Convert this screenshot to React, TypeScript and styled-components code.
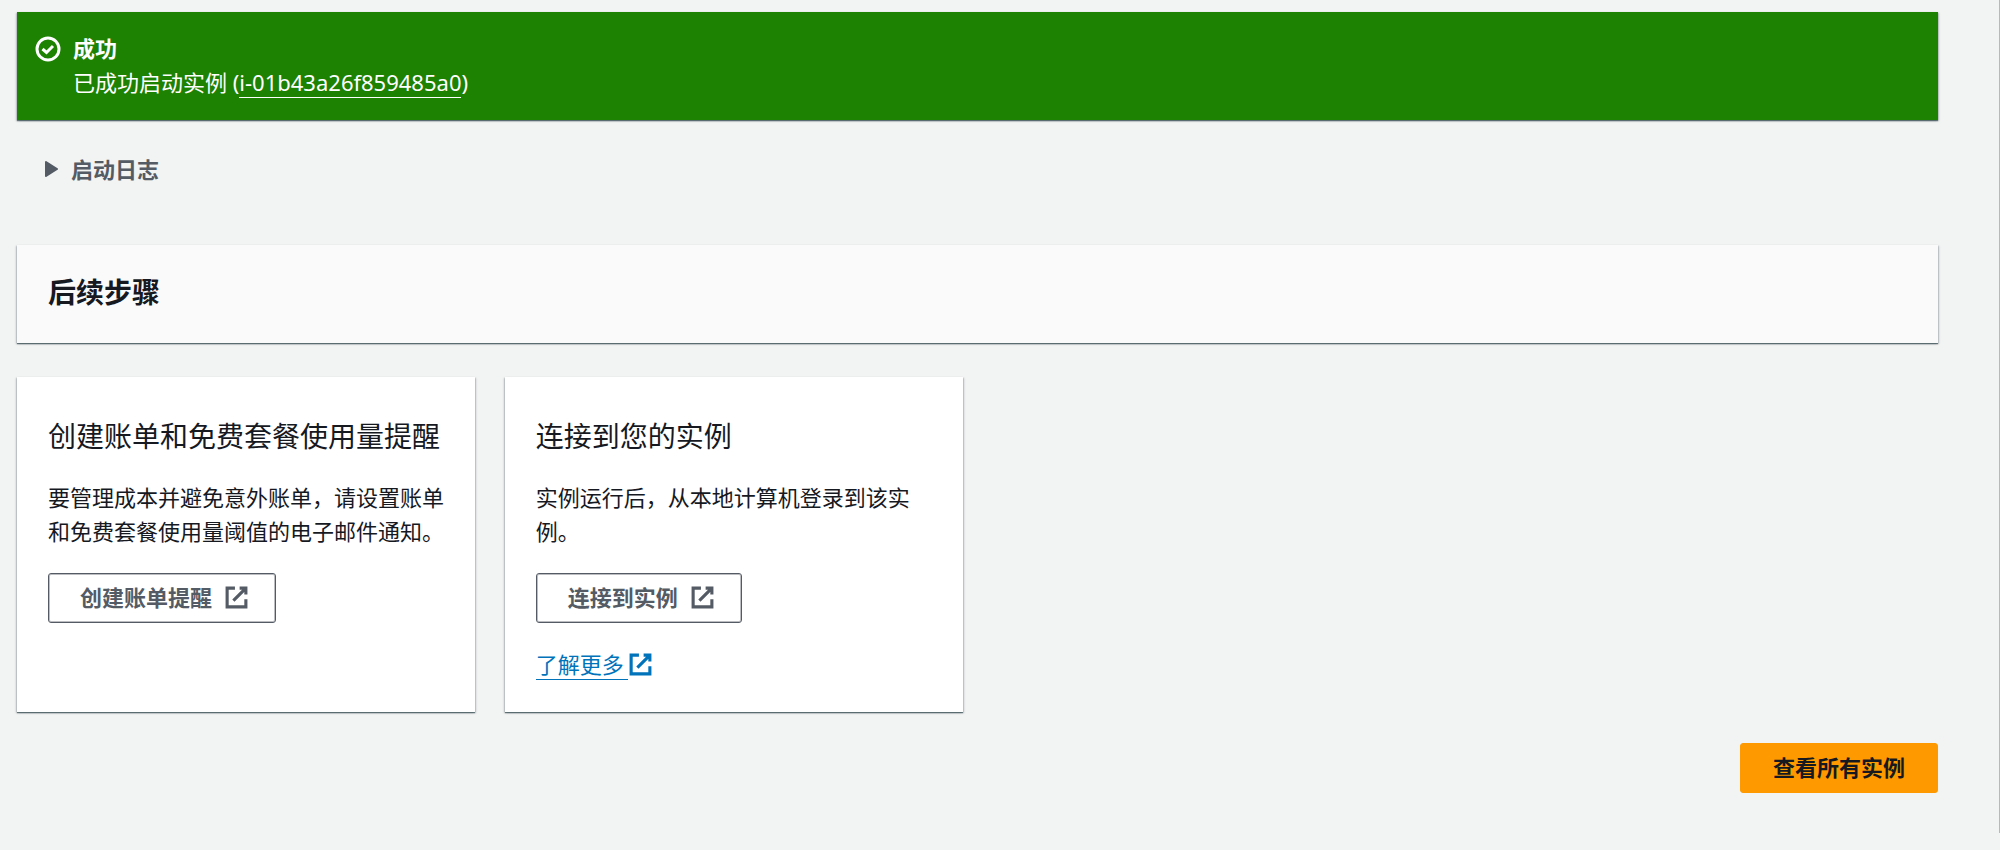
import React from 'react';
import styled, { createGlobalStyle, css } from 'styled-components';

const GlobalStyle = createGlobalStyle`
  *, *::before, *::after { box-sizing: border-box; }
  body {
    margin: 0;
    background: #f2f3f3;
    color: #16191f;
    font-family: "Noto Sans", "Noto Sans CJK SC", sans-serif;
    font-size: 22px;
    line-height: 34px;
  }
`;

const elevation = css`
  box-shadow:
    0 1px 1px 0 rgba(0, 28, 36, 0.5),
    1px 1px 2px 0 rgba(0, 28, 36, 0.2),
    -1px 1px 2px 0 rgba(0, 28, 36, 0.2);
`;

const Page = styled.main`
  display: flex;
  flex-direction: column;
  padding: 12px 61px 40px 17px;
  border-right: 1px solid #b3b9bc;
`;

const Alert = styled.section`
  display: flex;
  align-items: flex-start;
  gap: 12px;
  padding: 19px 18px 21px;
  background: #1d8102;
  color: #fff;
  ${elevation}
`;

const AlertIcon = styled.svg`
  width: 26px;
  height: 34px;
  flex: none;
`;

const AlertTitle = styled.h2`
  margin: 0;
  font-size: 22px;
  line-height: 34px;
  font-weight: 700;
`;

const AlertText = styled.p`
  margin: 0;
`;

const InstanceLink = styled.a`
  display: inline-block;
  line-height: 30px;
  color: inherit;
  text-decoration: none;
  border-bottom: 1px solid #fff;
`;

const LogToggle = styled.button`
  display: flex;
  align-items: center;
  align-self: flex-start;
  gap: 13px;
  margin: 32px 0 0 28px;
  padding: 0;
  border: 0;
  background: none;
  color: #545b64;
  font: inherit;
  font-weight: 700;
  cursor: pointer;
`;

const Panel = styled.section`
  background: #fafafa;
  margin-top: 59px;
  padding: 30px 31px 34px;
  ${elevation}
`;

const PanelTitle = styled.h2`
  margin: 0;
  font-size: 28px;
  line-height: 34px;
  font-weight: 700;
`;

const Cards = styled.div`
  display: grid;
  grid-template-columns: repeat(4, 1fr);
  gap: 30px;
  margin-top: 34px;
`;

const Card = styled.article`
  display: flex;
  flex-direction: column;
  align-items: flex-start;
  padding: 42px 30px 32px 31px;
  background: #fff;
  ${elevation}
`;

const CardTitle = styled.h3`
  margin: 0;
  font-size: 28px;
  line-height: 34px;
  font-weight: 400;
`;

const CardText = styled.p`
  margin: 27px 0 25px;
`;

const Button = styled.button<{ $primary?: boolean }>`
  display: inline-flex;
  align-items: center;
  gap: 12px;
  height: 50px;
  padding: ${(p) => (p.$primary ? '0 32px 2px' : '0 26px 2px 31px')};
  border: 1px solid ${(p) => (p.$primary ? '#ff9900' : '#545b64')};
  border-radius: 3px;
  background: ${(p) => (p.$primary ? '#ff9900' : '#fff')};
  box-shadow: ${(p) => (p.$primary ? 'none' : 'inset 0 0 0 1px rgba(84, 91, 100, 0.4)')};
  color: ${(p) => (p.$primary ? '#16191f' : '#545b64')};
  font: inherit;
  font-weight: 700;
  cursor: pointer;
`;

const MoreLink = styled.a`
  display: inline-flex;
  align-items: center;
  margin-top: 26px;
  color: #0073bb;
  text-decoration: none;
`;

const MoreText = styled.span`
  padding-right: 4px;
  line-height: 30px;
  border-bottom: 1px solid #0073bb;
`;

const Actions = styled.div`
  display: flex;
  justify-content: flex-end;
  margin-top: 31px;
`;

const ExternalIcon = () => (
  <svg width="25" height="25" viewBox="0 0 16 16" fill="none" stroke="currentColor" strokeWidth="2" aria-hidden="true">
    <path d="M10 2h4v4M6 10l8-8M14 9.05V14H2V2h5" />
  </svg>
);

export default function App() {
  return (
    <>
      <GlobalStyle />
      <Page lang="zh-CN">
        <Alert role="status">
          <AlertIcon viewBox="0 0 26 34" fill="none" stroke="currentColor" aria-hidden="true">
            <circle cx="13" cy="18" r="11" strokeWidth="3" />
            <path d="M7.5 18l4 3.5 6.5-6.500" strokeWidth="3" />
          </AlertIcon>
          <div>
            <AlertTitle>成功</AlertTitle>
            <AlertText>
              已成功启动实例 (<InstanceLink href="#instance">i-01b43a26f859485a0</InstanceLink>)
            </AlertText>
          </div>
        </Alert>

        <LogToggle type="button" aria-expanded="false">
          <svg width="13" height="18" viewBox="0 0 13 18" aria-hidden="true">
            <path d="M1 2l11 7L1 16z" fill="currentColor" stroke="currentColor" strokeWidth="2" strokeLinejoin="round" />
          </svg>
          启动日志
        </LogToggle>

        <Panel>
          <PanelTitle>后续步骤</PanelTitle>
        </Panel>

        <Cards>
          <Card>
            <CardTitle>创建账单和免费套餐使用量提醒</CardTitle>
            <CardText>要管理成本并避免意外账单，请设置账单和免费套餐使用量阈值的电子邮件通知。</CardText>
            <Button type="button">
              创建账单提醒
              <ExternalIcon />
            </Button>
          </Card>
          <Card>
            <CardTitle>连接到您的实例</CardTitle>
            <CardText>实例运行后，从本地计算机登录到该实例。</CardText>
            <Button type="button">
              连接到实例
              <ExternalIcon />
            </Button>
            <MoreLink href="#more">
              <MoreText>了解更多</MoreText>
              <ExternalIcon />
            </MoreLink>
          </Card>
        </Cards>

        <Actions>
          <Button type="button" $primary>
            查看所有实例
          </Button>
        </Actions>
      </Page>
    </>
  );
}
